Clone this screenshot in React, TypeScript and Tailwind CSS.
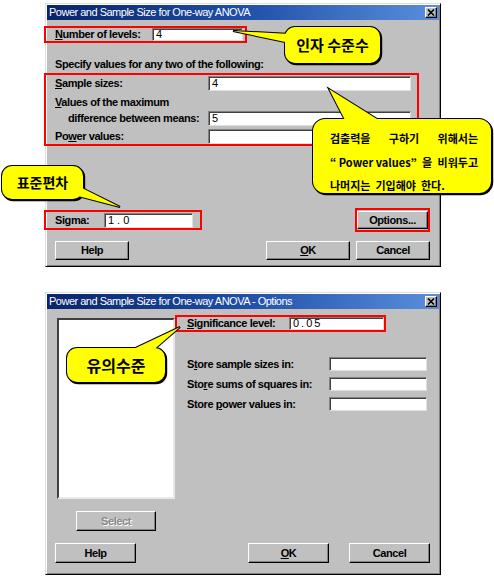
import type { ReactNode } from "react";

const raised =
  "bg-[#c0c0c0] border border-t-white border-l-white border-r-black border-b-black shadow-[inset_-1px_-1px_0_#808080]";
const sunken =
  "bg-white border border-t-[#808080] border-l-[#808080] border-r-[#dfdfdf] border-b-[#dfdfdf] shadow-[inset_1px_1px_0_#404040]";

function Button({ className, children }: { className: string; children: ReactNode }) {
  return (
    <div className={`${raised} ${className} flex items-center justify-center text-[11px] font-bold text-black whitespace-nowrap`}>
      {children}
    </div>
  );
}

function TextBox({ className, value }: { className: string; value?: string }) {
  return (
    <div className={`${sunken} ${className} flex items-center pl-[3px] text-[11px] font-normal leading-none tracking-normal`}>
      {value}
    </div>
  );
}

function TitleBar({ title }: { title: string }) {
  return (
    <div className="h-[15px] flex items-center justify-between bg-linear-to-r from-[#0a246a] via-[#1f4fa8] to-[#5b8fdc] pl-[2px] pr-[2px]">
      <span className="text-white text-[11px] font-normal tracking-[-0.5px] leading-none whitespace-nowrap">{title}</span>
      <div className={`${raised} w-[12px] h-[11px] flex items-center justify-center`}>
        <svg width="8" height="7" viewBox="0 0 8 7">
          <path d="M1 0.5 L7 6.5 M7 0.5 L1 6.5" stroke="#000" strokeWidth="1.6" />
        </svg>
      </div>
    </div>
  );
}

function Bubble({ x, y, w, h, r, tail }: { x: number; y: number; w: number; h: number; r: number; tail: string }) {
  return (
    <g>
      <g transform="translate(1.2 1.2)">
        <rect x={x} y={y} width={w} height={h} rx={r} fill="#000" stroke="#000" strokeWidth={2} />
      </g>
      <rect x={x} y={y} width={w} height={h} rx={r} fill="#ffff00" stroke="#000" strokeWidth={2} />
      <polygon points={tail} fill="#ffff00" stroke="#000" strokeWidth={2} />
      <rect x={x} y={y} width={w} height={h} rx={r} fill="#ffff00" />
      <polygon points={tail} fill="#ffff00" />
    </g>
  );
}

export default function App() {
  return (
    <div className="relative w-[494px] h-[581px] overflow-hidden bg-white flex flex-col pl-[45px] pt-[3px] text-black [font-family:'Liberation_Sans',Arial,sans-serif]">
      {/* 첫번째 대화상자 */}
      <div className="w-[396px] h-[264px] flex flex-col bg-[#c0c0c0] border border-t-[#dfdfdf] border-l-[#dfdfdf] border-r-black border-b-black shadow-[inset_1px_1px_0_#fff,inset_-1px_-1px_0_#808080] p-[1px] text-[11px] font-bold tracking-[-0.4px] whitespace-nowrap">
        <TitleBar title="Power and Sample Size for One-way ANOVA" />

        <div className="mt-[6px] ml-[-3px] w-[203px] h-[17px] border-2 border-[#ff0000] flex items-center">
          <span className="w-[106px] pl-[9px]">
            <u>N</u>umber of levels:
          </span>
          <TextBox className="w-[91px] h-[13px]" value="4" />
        </div>

        <div className="mt-[15px] h-[13px] pl-[8px] leading-[13px]">Specify values for any two of the following:</div>

        <div className="mt-[2px] ml-[-3px] w-[375px] h-[73px] border-2 border-[#ff0000] flex flex-col">
          <div className="mt-[1px] h-[15px] flex items-center">
            <span className="w-[162px] pl-[9px]">
              <u>S</u>ample sizes:
            </span>
            <TextBox className="w-[203px] h-[15px]" value="4" />
          </div>
          <div className="mt-[4px] h-[14px] pl-[9px] leading-[14px]">
            <u>V</u>alues of the maximum
          </div>
          <div className="mt-[2px] h-[15px] flex items-center">
            <span className="w-[162px] pl-[22px]">difference between means:</span>
            <TextBox className="w-[203px] h-[15px]" value="5" />
          </div>
          <div className="mt-[3px] h-[15px] flex items-center">
            <span className="w-[162px] pl-[9px]">
              Po<u>w</u>er values:
            </span>
            <TextBox className="w-[203px] h-[15px]" />
          </div>
        </div>

        <div className="mt-[62px] h-[24px] mr-[9px] flex items-center">
          <div className="ml-[-3px] w-[158px] h-[20px] border-2 border-[#ff0000] flex items-center">
            <span className="w-[58px] pl-[9px]">Sigma:</span>
            <TextBox className="w-[89px] h-[15px] !tracking-[3px]" value="1.0" />
          </div>
          <div className="ml-auto w-[75px] h-[24px] border-2 border-[#ff0000] flex items-center justify-center">
            <Button className="w-[71px] h-[18px]">Options...</Button>
          </div>
        </div>

        <div className="mt-[9px] h-[19px] flex">
          <Button className="ml-[8px] w-[74px] h-[19px]">Help</Button>
          <Button className="ml-auto w-[84px] h-[19px]">
            <u>O</u>K
          </Button>
          <Button className="ml-[6px] mr-[9px] w-[74px] h-[19px]">Cancel</Button>
        </div>
      </div>

      {/* 옵션 대화상자 */}
      <div className="mt-[25px] w-[396px] h-[283px] flex flex-col bg-[#c0c0c0] border border-t-[#dfdfdf] border-l-[#dfdfdf] border-r-black border-b-black shadow-[inset_1px_1px_0_#fff,inset_-1px_-1px_0_#808080] p-[1px] text-[11px] font-bold tracking-[-0.4px] whitespace-nowrap">
        <TitleBar title="Power and Sample Size for One-way ANOVA - Options" />

        <div className="flex">
          <div className="pl-[10px] pt-[9px] flex flex-col">
            <div className="w-[118px] h-[181px] bg-white border-2 border-t-[#404040] border-l-[#404040] border-r-[#e8e8e8] border-b-[#e8e8e8]" />
            <Button className="mt-[12px] ml-[19px] w-[80px] h-[20px]">
              <span className="text-[#8a8a8a] [text-shadow:1px_1px_0_#fff]">Select</span>
            </Button>
          </div>

          <div className="pt-[6px] flex flex-col">
            <div className="w-[211px] h-[17px] border-2 border-[#ff0000] flex items-center">
              <span className="w-[112px] pl-[10px]">
                <u>S</u>ignificance level:
              </span>
              <TextBox className="w-[95px] h-[13px] !tracking-[2px]" value="0.05" />
            </div>

            <div className="mt-[25px] flex flex-col gap-[6px]">
              <div className="h-[14px] flex items-center">
                <span className="w-[154px] pl-[12px]">
                  S<u>t</u>ore sample sizes in:
                </span>
                <TextBox className="w-[98px] h-[14px]" />
              </div>
              <div className="h-[14px] flex items-center">
                <span className="w-[154px] pl-[12px]">
                  Sto<u>r</u>e sums of squares in:
                </span>
                <TextBox className="w-[98px] h-[14px]" />
              </div>
              <div className="h-[14px] flex items-center">
                <span className="w-[154px] pl-[12px]">
                  Store <u>p</u>ower values in:
                </span>
                <TextBox className="w-[98px] h-[14px]" />
              </div>
            </div>
          </div>
        </div>

        <div className="mt-[12px] h-[20px] flex">
          <Button className="ml-[8px] w-[81px] h-[20px]">Help</Button>
          <Button className="ml-auto w-[81px] h-[20px]">
            <u>O</u>K
          </Button>
          <Button className="ml-[20px] mr-[9px] w-[81px] h-[20px]">Cancel</Button>
        </div>
      </div>

      {/* 말풍선 */}
      <svg className="absolute left-0 top-0 pointer-events-none" width="494" height="581" viewBox="0 0 494 581">
        <Bubble x={285} y={27} w={95} h={36} r={10} tail="233,31 290,34 290,43" />
        <Bubble x={313} y={119} w={178} h={74} r={12} tail="329,89 347,124 385,124" />
        <Bubble x={2} y={166} w={81} h={33} r={10} tail="120,207 78,186 78,196" />
        <Bubble x={67} y={348} w={98} h={34} r={10} tail="180,327 125,353 150,353" />
      </svg>

      <div className="absolute left-[285px] top-[27px] w-[95px] h-[36px] flex items-center justify-center text-[15px] font-bold [font-family:'Noto_Sans_CJK_KR',sans-serif]">
        인자 수준수
      </div>
      <div className="absolute left-[2px] top-[166px] w-[81px] h-[33px] flex items-center justify-center text-[14px] font-bold [font-family:'Noto_Sans_CJK_KR',sans-serif]">
        표준편차
      </div>
      <div className="absolute left-[67px] top-[348px] w-[98px] h-[34px] flex items-center justify-center text-[16px] font-bold [font-family:'Noto_Sans_CJK_KR',sans-serif]">
        유의수준
      </div>
      <div className="absolute left-[330px] top-[127px] w-[148px] flex flex-col text-[11px] font-bold leading-[23.5px] [font-family:'Noto_Sans_CJK_KR',sans-serif]">
        <div className="flex justify-between">
          <span>검출력을</span>
          <span>구하기</span>
          <span>위해서는</span>
        </div>
        <div className="flex justify-between">
          <span>“ Power values”</span>
          <span>을</span>
          <span>비워두고</span>
        </div>
        <div className="whitespace-pre">나머지는  기입해야  한다.</div>
      </div>
    </div>
  );
}
